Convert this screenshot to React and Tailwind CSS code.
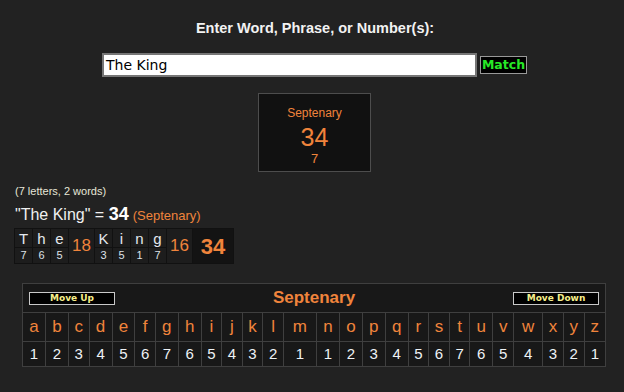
const LETTERS = 'abcdefghijklmnopqrstuvwxyz'.split('');
const VALUES = [1, 2, 3, 4, 5, 6, 7, 6, 5, 4, 3, 2, 1, 1, 2, 3, 4, 5, 6, 7, 6, 5, 4, 3, 2, 1];

const WORDS = [
    { letters: [['T', 7], ['h', 6], ['e', 5]], sum: 18 },
    { letters: [['K', 3], ['i', 5], ['n', 1], ['g', 7]], sum: 16 },
];

function Breakdown() {
    return (
        <div className="flex w-fit gap-px bg-[#111] p-px">
            {WORDS.map((w, wi) => (
                <div key={wi} className="flex gap-px">
                    {w.letters.map(([ch, v], i) => (
                        <div key={i} className="flex w-[17px] flex-col gap-px">
                            <div className="flex h-[18px] items-center justify-center bg-[#1d1d1d] text-[15px] leading-none text-[#e4e8ee]">{ch}</div>
                            <div className="flex h-[15px] items-center justify-center bg-[#1d1d1d] text-[11px] leading-none text-[#dde2e8]">{v}</div>
                        </div>
                    ))}
                    <div className="flex w-[25px] items-center justify-center bg-[#1d1d1d] text-[17px] text-[#f0843c]">{w.sum}</div>
                </div>
            ))}
            <div className="flex w-[40px] items-center justify-center bg-[#131313] text-[22px] font-bold text-[#f0843c]">34</div>
        </div>
    );
}

export default function App() {
    return (
        <div className="min-h-[392px] w-full bg-[#222222] font-['Liberation_Sans',Arial,sans-serif] text-[#eee]">
            {/* input area */}
            <div className="flex flex-col items-center pt-[20px]">
                <div className="pl-[6px] text-[14.5px] font-bold leading-[16px] text-[#f2f2f2]">Enter Word, Phrase, or Number(s):</div>
                <div className="mt-[17px] flex items-center pl-[5px]">
                    <div className="flex h-[24px] w-[375px] items-center border-2 border-[#767676] bg-white pl-[2px] font-['DejaVu_Sans',sans-serif] text-[14px] text-black">The King</div>
                    <button className="ml-[3px] h-[18px] w-[47px] border border-[#999] bg-black font-['DejaVu_Sans',sans-serif] text-[12.5px] font-bold leading-none text-[#27e827]">Match</button>
                </div>
                <div className="mt-[16px] ml-[5px] flex h-[79px] w-[113px] flex-col items-center border border-[#4d4d4d] bg-[#111] pt-[11px] text-[#f0843c]">
                    <div className="text-[12px] leading-[16px]">Septenary</div>
                    <div className="mt-[3px] text-[25px] leading-[27px]">34</div>
                    <div className="mt-[1px] text-[13px] leading-[14px]">7</div>
                </div>
            </div>

            {/* result */}
            <div className="pl-[15px]">
                <div className="mt-[12px] text-[11px] leading-[14px] text-[#e6e6d8]">(7 letters, 2 words)</div>
                <div className="mt-[6px] flex items-baseline text-[16px] leading-[20px] text-[#f0f0f0]">
                    <span>"The King" =&nbsp;</span>
                    <span className="text-[18px] font-bold text-white">34</span>
                    <span className="ml-[4px] text-[13px] text-[#f0843c]">(Septenary)</span>
                </div>
                <div className="mt-[2px] -ml-px">
                    <Breakdown />
                </div>
            </div>

            {/* cipher chart */}
            <table className="mt-[19px] ml-[22px] w-[584px] border-collapse border border-[#3f3f3f] bg-[#181818]">
                <thead>
                    <tr>
                        <th colSpan={26} className="h-[29px] p-0">
                            <div className="flex items-center justify-between px-[6px]">
                                <button className="h-[13px] w-[86px] border border-[#c8c8c8] bg-black font-['DejaVu_Sans',sans-serif] text-[9px] font-bold leading-none text-[#f5ee8a]">Move Up</button>
                                <span className="text-[17px] font-bold text-[#f0843c]">Septenary</span>
                                <button className="h-[13px] w-[86px] border border-[#c8c8c8] bg-black font-['DejaVu_Sans',sans-serif] text-[9px] font-bold leading-none text-[#f5ee8a]">Move Down</button>
                            </div>
                        </th>
                    </tr>
                </thead>
                <tbody>
                    <tr>
                        {LETTERS.map((l) => (
                            <td key={l} className="h-[29px] border border-[#3f3f3f] p-0 text-center text-[17px] text-[#f0843c]">{l}</td>
                        ))}
                    </tr>
                    <tr>
                        {VALUES.map((v, i) => (
                            <td key={i} className="h-[25px] border border-[#3f3f3f] p-0 text-center text-[15px] text-[#eef2f5]">{v}</td>
                        ))}
                    </tr>
                </tbody>
            </table>
        </div>
    );
}
